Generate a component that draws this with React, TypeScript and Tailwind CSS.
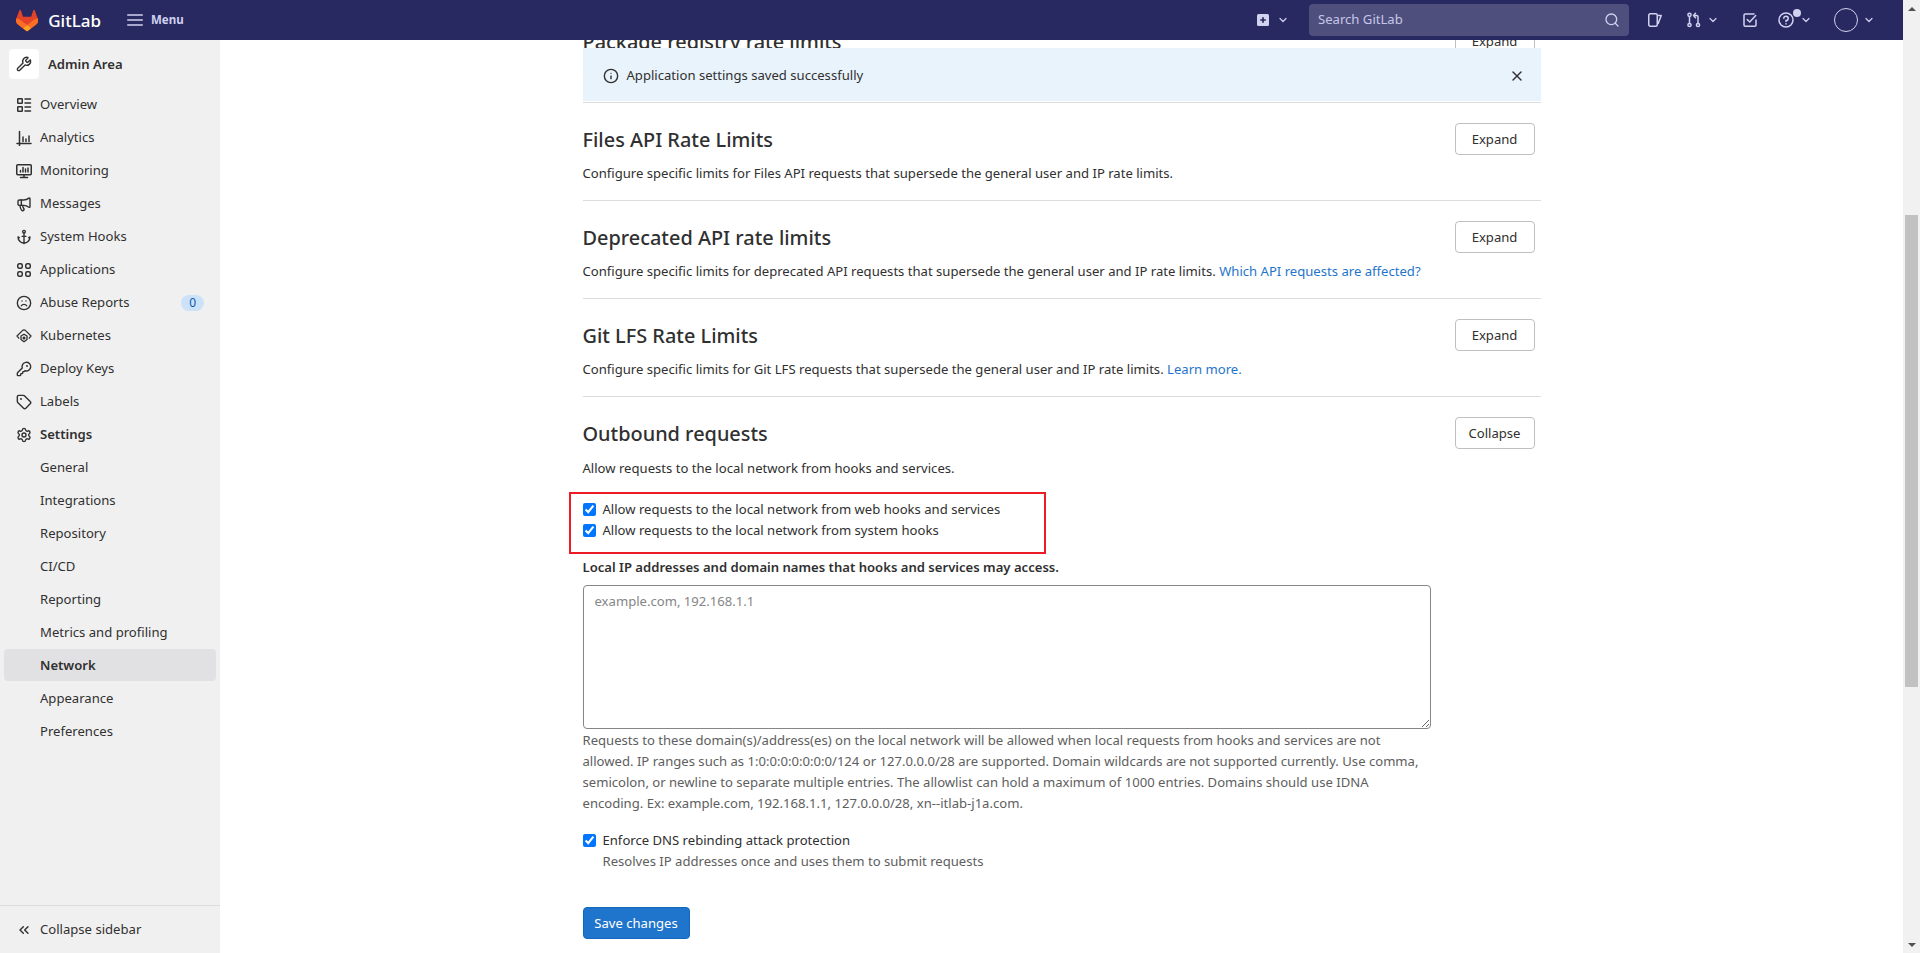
import React from "react";
import { Wrench, Anchor, Frown, KeyRound, Settings, Tag, Megaphone, ChevronsLeft, Search, X, Info, ChevronDown } from "lucide-react";

const S = ({ children, size = 16, className = "" }: { children: React.ReactNode; size?: number; className?: string }) => (
  <svg width={size} height={size} viewBox="0 0 16 16" fill="none" stroke="currentColor" strokeWidth="1.5" strokeLinecap="round" strokeLinejoin="round" className={className}>
    {children}
  </svg>
);

const Overview = () => (
  <S>
    <rect x="1.75" y="1.75" width="4.5" height="4.5" rx=".5" />
    <rect x="1.75" y="9.75" width="4.5" height="4.5" rx=".5" />
    <path d="M9 2h5.5M9 6h5.5M9 10h5.5M9 14h5.5" />
  </S>
);
const Analytics = () => (
  <S>
    <path d="M1 13.5h14M3.5 1.5v14M7 7v4.5M10 9v2.5M13 6v5.5" />
  </S>
);
const Monitor = () => (
  <S>
    <rect x=".75" y="1.75" width="14.5" height="10" rx="1" />
    <path d="M8 12v2.5M4.5 14.5h7M4.5 9V7.5M7 9V4.5M9.5 9V6M12 9V5" />
  </S>
);
const Apps = () => (
  <S>
    <rect x="1.75" y="1.75" width="4.5" height="4.5" rx="1.5" />
    <rect x="9.75" y="1.75" width="4.5" height="4.5" rx="1.5" />
    <rect x="1.75" y="9.75" width="4.5" height="4.5" rx="1.5" />
    <rect x="9.75" y="9.75" width="4.5" height="4.5" rx="1.5" />
  </S>
);
const Kube = () => (
  <svg width="16" height="16" viewBox="0 0 16 16" fill="none" stroke="currentColor" strokeWidth="1.3" strokeLinecap="round" strokeLinejoin="round">
    <path d="M2.8 10.2 1 8l5.4-5.4a2.2 2.2 0 0 1 3.2 0L15 8l-1.8 2.2" />
    <path d="M8 6.2l3 1.8v3.6l-3 2.2-3-2.2V8z" />
    <circle cx="8" cy="10" r=".9" />
  </svg>
);

const Logo = () => (
  <svg width="24" height="23" viewBox="0 0 25 24">
    <path d="m24.507 9.5-.034-.09L21.082.562a.896.896 0 0 0-1.694.091l-2.29 7.01H7.825L5.535.653a.898.898 0 0 0-1.694-.09L.451 9.411.416 9.5a6.297 6.297 0 0 0 2.09 7.278l.012.01.03.022 5.16 3.867 2.56 1.935 1.554 1.176a1.051 1.051 0 0 0 1.268 0l1.555-1.176 2.56-1.935 5.197-3.89.014-.01A6.297 6.297 0 0 0 24.507 9.5Z" fill="#E24329" />
    <path d="m24.507 9.5-.034-.09a11.44 11.44 0 0 0-4.56 2.051l-7.447 5.632 4.742 3.584 5.197-3.89.014-.01A6.297 6.297 0 0 0 24.507 9.5Z" fill="#FC6D26" />
    <path d="m7.707 20.677 2.56 1.935 1.555 1.176a1.051 1.051 0 0 0 1.268 0l1.555-1.176 2.56-1.935-4.743-3.584-4.755 3.584Z" fill="#FCA326" />
    <path d="M5.01 11.461a11.43 11.43 0 0 0-4.56-2.05L.416 9.5a6.297 6.297 0 0 0 2.09 7.278l.012.01.03.022 5.16 3.867 4.745-3.584-7.444-5.632Z" fill="#FC6D26" />
  </svg>
);

const sw = 2.1;
const mainItems: { label: string; icon: React.ReactNode }[] = [
  { label: "Overview", icon: <Overview /> },
  { label: "Analytics", icon: <Analytics /> },
  { label: "Monitoring", icon: <Monitor /> },
  { label: "Messages", icon: <Megaphone size={16} strokeWidth={sw} /> },
  { label: "System Hooks", icon: <Anchor size={16} strokeWidth={sw} /> },
  { label: "Applications", icon: <Apps /> },
  { label: "Abuse Reports", icon: <Frown size={16} strokeWidth={sw} /> },
  { label: "Kubernetes", icon: <Kube /> },
  { label: "Deploy Keys", icon: <KeyRound size={16} strokeWidth={sw} /> },
  { label: "Labels", icon: <Tag size={16} strokeWidth={sw} /> },
];
const subItems = ["General", "Integrations", "Repository", "CI/CD", "Reporting", "Metrics and profiling", "Network", "Appearance", "Preferences"];

const Row = ({ label, icon, bold, badge, active }: { label: string; icon?: React.ReactNode; bold?: boolean; badge?: boolean; active?: boolean }) => (
  <div className={`mx-1 mb-px flex h-8 items-center rounded pl-3 pr-3 pt-[2px] ${active ? "bg-[#e1e1e4]" : ""}`}>
    <span className="flex w-6 shrink-0 text-[#303030]">{icon}</span>
    <span className={`flex-1 text-[#303030] ${bold ? "font-semibold" : ""}`}>{label}</span>
    {badge && <span className="rounded-full bg-[#cbe2f9] px-2 text-xs leading-4 text-[#0b5cad]">0</span>}
  </div>
);

const Sidebar = () => (
  <aside className="flex w-[220px] shrink-0 flex-col bg-[#f0f0f0]">
    <div className="flex h-[47px] items-start pl-[9px] pt-[9px]">
      <span className="flex h-[30px] w-[30px] items-center justify-center rounded bg-white text-[#303030]">
        <Wrench size={16} strokeWidth={sw} />
      </span>
      <span className="ml-[9px] font-semibold leading-[30px] text-[#303030]">Admin Area</span>
    </div>
    <div className="flex-1 pt-[1px]">
      {mainItems.map((m) => (
        <Row key={m.label} label={m.label} icon={m.icon} badge={m.label === "Abuse Reports"} />
      ))}
      <Row label="Settings" icon={<Settings size={16} strokeWidth={sw} />} bold />
      {subItems.map((s) => (
        <Row key={s} label={s} active={s === "Network"} bold={s === "Network"} />
      ))}
    </div>
    <div className="flex h-12 items-center border-t border-[#dcdcde] pl-4">
      <span className="w-6 text-[#303030]">
        <ChevronsLeft size={16} strokeWidth={sw} />
      </span>
      <span className="text-[#303030]">Collapse sidebar</span>
    </div>
  </aside>
);

const TopBar = () => (
  <header className="flex h-10 shrink-0 items-center bg-[#292961] text-[#d1d1f0]">
    <div className="ml-4 flex w-[85px] items-center">
      <Logo />
      <span className="ml-[10px] text-[17px] font-medium leading-none text-white">GitLab</span>
    </div>
    <div className="ml-[26px] flex items-center">
      <svg width="16" height="16" viewBox="0 0 16 16" fill="none" stroke="currentColor" strokeWidth="1.5" strokeLinecap="round">
        <path d="M.75 3h14.5M.75 8h14.5M.75 13h14.5" />
      </svg>
      <span className="ml-2 text-[11.5px] font-bold">Menu</span>
    </div>
    <div className="ml-auto flex items-center">
      <svg width="16" height="16" viewBox="0 0 16 16">
        <rect x="2" y="2" width="12" height="12" rx="1.5" fill="#d1d1f0" />
        <path d="M8 5.2v5.6M5.2 8h5.6" stroke="#292961" strokeWidth="1.7" />
      </svg>
      <ChevronDown size={12} strokeWidth={2.4} className="ml-[6px]" />
      <div className="ml-[20px] flex h-8 w-[320px] items-center rounded bg-[#4f4f7e] pl-[9px] pr-[9px]">
        <span className="flex-1 text-[#c6c6e8]">Search GitLab</span>
        <Search size={16} strokeWidth={2} />
      </div>
      <svg width="16" height="16" viewBox="0 0 16 16" fill="none" stroke="currentColor" strokeWidth="1.5" strokeLinejoin="round" className="ml-[18px]">
        <rect x="1.75" y="1.75" width="8.5" height="12.5" rx="1.5" />
        <path d="M10.5 3.5h3.7L11 12" />
      </svg>
      <svg width="16" height="16" viewBox="0 0 16 16" fill="none" stroke="currentColor" strokeWidth="1.5" strokeLinecap="round" strokeLinejoin="round" className="ml-[23px]">
        <circle cx="3.5" cy="2.8" r="1.6" />
        <circle cx="3.5" cy="13" r="1.6" />
        <circle cx="12" cy="13" r="1.6" />
        <path d="M3.5 4.5v7M12 11.4V5a1.5 1.5 0 0 0-1.5-1.5H8M9.5 1.2 7.5 3.5l2 2.2" />
      </svg>
      <ChevronDown size={12} strokeWidth={2.4} className="ml-[5px]" />
      <svg width="16" height="16" viewBox="0 0 16 16" fill="none" stroke="currentColor" strokeWidth="1.5" strokeLinecap="round" strokeLinejoin="round" className="ml-[23px]">
        <path d="M14 8v5a1.2 1.2 0 0 1-1.2 1.2H3.2A1.2 1.2 0 0 1 2 13V3.2A1.2 1.2 0 0 1 3.2 2H12" />
        <path d="m5.2 7.5 2.5 2.5 6-6.5" />
      </svg>
      <div className="relative ml-[20px] h-4 w-4">
        <svg width="16" height="16" viewBox="0 0 16 16" fill="none" stroke="currentColor" strokeWidth="1.5" strokeLinecap="round">
          <circle cx="8" cy="8" r="7" />
          <path d="M5.8 6.2A2.2 2.2 0 1 1 8 8.6v1" />
          <path d="M8 11.8v.2" />
        </svg>
        <span className="absolute -right-[7px] -top-[3px] h-2 w-2 rounded-full bg-[#d1d1f0]" />
      </div>
      <ChevronDown size={12} strokeWidth={2.4} className="ml-[6px]" />
      <span className="ml-[22px] h-6 w-6 rounded-full border border-[#d1d1f0]" />
      <ChevronDown size={12} strokeWidth={2.4} className="ml-[5px] mr-[28px]" />
    </div>
  </header>
);

const Btn = ({ label }: { label: string }) => (
  <span className="mr-[6px] mt-5 flex h-8 w-20 shrink-0 items-center justify-center rounded border border-[#bfbfbf] bg-white pt-[2px] text-[#303030]">{label}</span>
);

const Section = ({ title, children }: { title: string; children?: React.ReactNode }) => (
  <section className="flex h-[98px] items-start justify-between border-b border-[#dcdcde]">
    <div>
      <h4 className="mt-[20px] text-[19.9px] font-medium leading-[34px] text-[#303030]">{title}</h4>
      <p className="mt-[2px] leading-[29px] text-[#303030]">{children}</p>
    </div>
    <Btn label="Expand" />
  </section>
);

const Check = ({ label, className = "" }: { label: string; className?: string }) => (
  <label className={`flex h-[21px] items-center text-[#303030] ${className}`}>
    <input type="checkbox" defaultChecked className="m-0 mr-[7px] h-[13px] w-[13px] accent-[#0075ff]" />
    {label}
  </label>
);

const Main = () => (
  <main className="relative flex-1 overflow-hidden bg-white">
    <div className="mx-auto -mt-[35px] w-[958px]">
      <Section title="Package registry rate limits">Configure specific limits for Package Registry web requests.</Section>
      <Section title="Files API Rate Limits">Configure specific limits for Files API requests that supersede the general user and IP rate limits.</Section>
      <Section title="Deprecated API rate limits">
        Configure specific limits for deprecated API requests that supersede the general user and IP rate limits. <a className="text-[#1f75cb]">Which API requests are affected?</a>
      </Section>
      <Section title="Git LFS Rate Limits">
        Configure specific limits for Git LFS requests that supersede the general user and IP rate limits. <a className="text-[#1f75cb]">Learn more.</a>
      </Section>

      <section>
        <div className="flex items-start justify-between">
          <h4 className="mt-[20px] text-[19.9px] font-medium leading-[34px] text-[#303030]">Outbound requests</h4>
          <Btn label="Collapse" />
        </div>
        <p className="mt-[2px] leading-[30px] text-[#303030]">Allow requests to the local network from hooks and services.</p>
        <div className="relative mt-[16px] w-fit">
          <Check label="Allow requests to the local network from web hooks and services" />
          <Check label="Allow requests to the local network from system hooks" />
          <div className="absolute -left-[14px] -top-[7px] h-[62px] w-[477px] border-2 border-[#ed1c24]" />
        </div>
        <div className="mt-[16px] font-semibold leading-[21px] text-[#303030]">Local IP addresses and domain names that hooks and services may access.</div>
        <textarea readOnly placeholder="example.com, 192.168.1.1" className="mt-[7px] block h-[144px] w-[848px] rounded border border-[#868686] px-[11px] py-[6px] text-[#303030] placeholder:text-[#868686]" />
        <p className="w-[848px] pt-[1px] leading-[21px] text-[#5e5e5e]">
          Requests to these domain(s)/address(es) on the local network will be allowed when local requests from hooks and services are not allowed. IP ranges such as 1:0:0:0:0:0:0:0/124 or 127.0.0.0/28 are supported. Domain wildcards are not supported currently. Use comma, semicolon, or newline to separate multiple entries. The allowlist can hold a maximum of 1000 entries. Domains should use IDNA encoding. Ex: example.com, 192.168.1.1, 127.0.0.0/28, xn--itlab-j1a.com.
        </p>
        <Check label="Enforce DNS rebinding attack protection" className="mt-[16px]" />
        <p className="pl-5 leading-[21px] text-[#5e5e5e]">Resolves IP addresses once and uses them to submit requests</p>
        <button className="mt-[35px] flex h-8 w-[107px] items-center justify-center rounded border border-[#1068bf] bg-[#1f75cb] pt-[2px] text-white">Save changes</button>
      </section>
    </div>

    <div className="absolute left-1/2 top-[8px] flex h-[53px] w-[958px] -translate-x-1/2 items-center bg-[#e9f3fc] pl-5 pr-[16px] pt-[2px] text-[#303030]">
      <Info size={16} strokeWidth={sw} />
      <span className="ml-2 flex-1">Application settings saved successfully</span>
      <X size={16} strokeWidth={sw} />
    </div>
  </main>
);

const Scrollbar = () => (
  <div className="flex w-[17px] shrink-0 flex-col items-center bg-[#f1f1f1]">
    <div className="flex h-[17px] w-full items-center justify-center">
      <span className="h-0 w-0 border-x-[4px] border-b-[4px] border-x-transparent border-b-[#505050]" />
    </div>
    <div className="mt-[198px] h-[472px] w-[13px] bg-[#c1c1c1]" />
    <div className="mt-auto flex h-[17px] w-full items-center justify-center">
      <span className="h-0 w-0 border-x-[4px] border-t-[4px] border-x-transparent border-t-[#505050]" />
    </div>
  </div>
);

export default function App() {
  return (
    <div className="flex h-[953px] overflow-hidden bg-white font-['Noto_Sans',sans-serif] text-[13.1px]">
      <div className="flex min-w-0 flex-1 flex-col">
        <TopBar />
        <div className="flex min-h-0 flex-1">
          <Sidebar />
          <Main />
        </div>
      </div>
      <Scrollbar />
    </div>
  );
}
